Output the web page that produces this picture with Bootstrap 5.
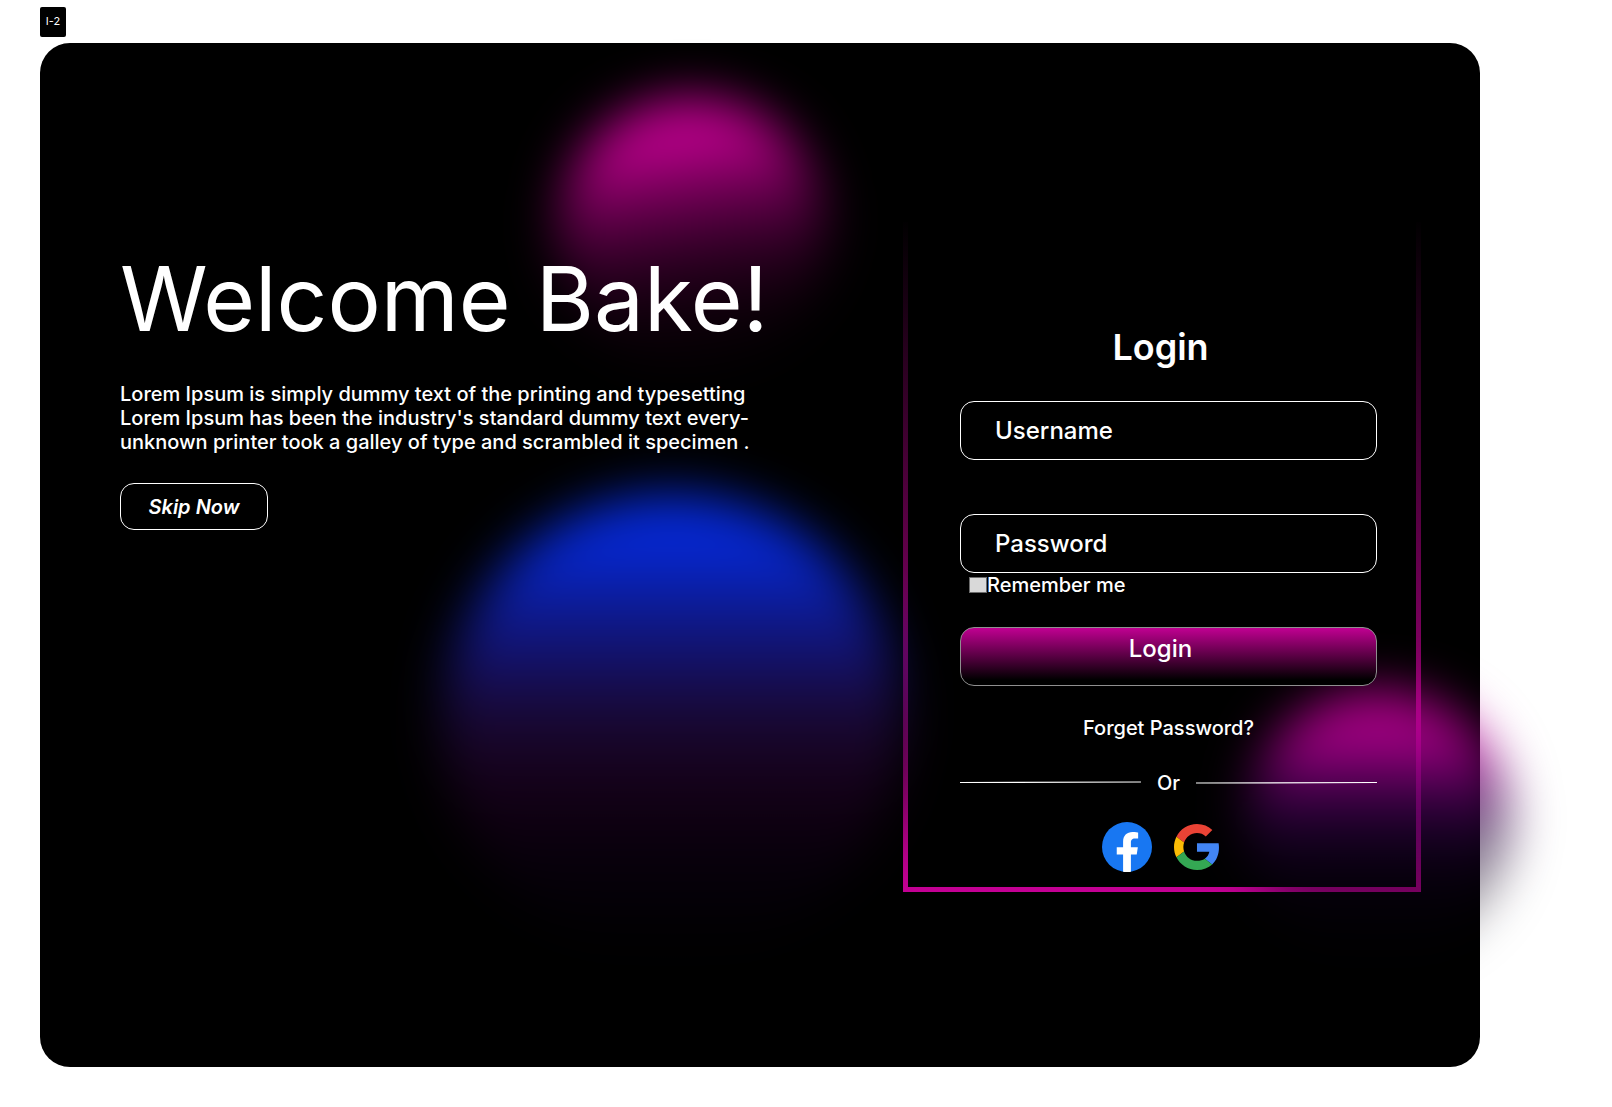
<!DOCTYPE html>
<html lang="en">
<head>
<meta charset="utf-8">
<meta name="viewport" content="width=device-width, initial-scale=1">
<title>Login</title>
<link href="https://cdn.jsdelivr.net/npm/bootstrap@5.3.0/dist/css/bootstrap.min.css" rel="stylesheet">
<style>
  body { font-family: Inter, "Liberation Sans", sans-serif; color: #fff; background: #fff; overflow-x: hidden; }
  .page { padding: 7px 132px 40px 40px; }
  .frame-tag { width: 26px; height: 30px; margin-bottom: 6px; border-radius: 2px; font-size: 11px; line-height: 14px; padding-bottom: 2px; }
  .stage { min-height: 1024px; border-radius: 30px; background: #000; padding: 179px 59px 175px 80px; gap: 60px; }

  .intro { padding-top: 22px; z-index: 2; }
  .intro h1 { font-size: 89px; line-height: 109px; font-weight: 400; margin-bottom: 29px; }
  .intro p { font-size: 20px; line-height: 24px; font-weight: 500; margin-bottom: 29px; }
  .btn-skip { width: 148px; height: 47px; border: 1px solid #fff; border-radius: 14px; color: #fff; font-size: 20px; line-height: 24px; font-weight: 600; font-style: italic; padding: 0; }
  .btn-skip:hover { background: #fff; color: #000; }

  .login-panel { width: 518px; border: 0 solid; border-width: 0 5px 5px; border-image: linear-gradient(rgba(196,0,148,0), #c40094) 5; padding: 103px 39px 15px 52px; }
  .login-form { z-index: 2; }
  .login-form h2 { font-size: 36px; line-height: 44px; font-weight: 600; margin-bottom: 32px; }
  .field { height: 59px; border: 1px solid #fff; border-radius: 14px; background: transparent; color: #fff; font-size: 24px; line-height: 30px; font-weight: 500; padding: 0 34px; }
  .field:focus { background: transparent; color: #fff; border-color: #c40094; box-shadow: none; }
  .field::placeholder { color: #fff; opacity: 1; }
  .field-gap { margin-bottom: 54px; }
  .remember { padding-left: 9px; margin-bottom: 30px; }
  .login-form .remember-box { width: 18px; height: 16px; margin: 0; border: 1px solid #6b6b6b; border-radius: 0; background-color: #d9d9d9; }
  .login-form .remember-box:checked { background-color: #c40094; }
  .note { font-size: 20px; line-height: 24px; font-weight: 500; }
  .btn-login { height: 59px; border: 1px solid #8f8f8f; border-radius: 14px; background: linear-gradient(#c40094, #000 90%) border-box; color: #fff; font-size: 24px; line-height: 30px; font-weight: 500; padding: 0 16px 16px 0; margin-bottom: 30px; }
  .btn-login:hover { color: #fff; border-color: #fff; }
  .divider { gap: 16px; margin: 31px 0 27px; }
  .divider svg { height: 4px; flex: 1 1 0; min-width: 0; }
  .socials { gap: 22px; }

  .glow { position: absolute; border-radius: 50%; pointer-events: none; z-index: 1; filter: blur(25px); }
  .glow-pink { left: 517px; top: 54px; width: 270px; height: 270px;
    background: linear-gradient(172deg, #c40094 0%, #b80089 20%, #6a0050 38%, #2c0022 58%, #0e000a 76%, #000 100%); }
  .glow-blue { left: 402px; top: 450px; width: 460px; height: 460px;
    background: linear-gradient(#052ad8 0%, #0626cc 13%, #0d1b92 25%, #13126c 35%, #180a3c 46%, #180422 57%, #100012 69%, #06000a 82%, #000 100%); }
  .glow-corner { right: -30px; top: 647px; width: 264px; height: 264px;
    background: linear-gradient(rgba(196,0,152,.9) 0%, rgba(184,0,150,.85) 20%, rgba(100,0,105,.76) 35%, rgba(50,4,72,.66) 48%, rgba(22,0,38,.5) 63%, rgba(10,0,20,.4) 78%, rgba(0,0,0,.36) 100%); }

  @media (max-width: 1400px) {
    .page { padding-right: 40px; }
    .stage { flex-wrap: wrap; padding: 80px 40px; }
  }
  @media (max-width: 700px) {
    .intro h1 { font-size: 48px; line-height: 58px; }
    .login-panel { padding-left: 24px; padding-right: 24px; }
  }
</style>
<script src="https://cdn.jsdelivr.net/npm/bootstrap@5.3.0/dist/js/bootstrap.bundle.min.js"></script>
</head>
<body>
<div class="page">
  <div class="frame-tag bg-black d-flex align-items-center justify-content-center">I-2</div>
  <main class="stage position-relative d-flex align-items-start justify-content-between">
    <div class="glow glow-pink"></div>
    <div class="glow glow-blue"></div>
    <div class="glow glow-corner"></div>

    <section class="intro position-relative">
      <h1>Welcome Bake!</h1>
      <p>Lorem Ipsum is simply dummy text of the printing and typesetting<br>Lorem Ipsum has been the industry's standard dummy text every-<br>unknown printer took a galley of type and scrambled it specimen .</p>
      <button type="button" class="btn btn-skip">Skip Now</button>
    </section>

    <section class="login-panel mw-100">
      <form class="login-form position-relative">
        <h2 class="text-center pe-3">Login</h2>
        <label class="d-block field-gap" for="username">
          <input class="form-control field" id="username" type="text" placeholder="Username" aria-label="Username">
        </label>
        <label class="d-block" for="password">
          <input class="form-control field" id="password" type="password" placeholder="Password" aria-label="Password">
        </label>
        <div class="remember d-flex align-items-center">
          <input class="form-check-input remember-box" id="remember" type="checkbox">
          <label class="note" for="remember">Remember me</label>
        </div>
        <button type="submit" class="btn btn-login w-100">Login</button>
        <div class="text-center note"><a class="text-white text-decoration-none" href="#">Forget Password?</a></div>
        <div class="divider d-flex align-items-center">
          <svg viewBox="0 0 181 4" preserveAspectRatio="none" aria-hidden="true"><path d="M0 1.5L181 1" stroke="#fff" stroke-width="1.2"/></svg>
          <span class="note">Or</span>
          <svg viewBox="0 0 181 4" preserveAspectRatio="none" aria-hidden="true"><path d="M0 2L181 1.5" stroke="#fff" stroke-width="1.2"/></svg>
        </div>
        <div class="socials d-flex align-items-center justify-content-center pe-3">
          <a class="d-flex" href="#" aria-label="Facebook">
            <svg width="50" height="50" viewBox="0 0 24 24"><circle cx="12" cy="12" r="12" fill="#1877f2"/><path fill="#fff" d="M10.125 23.927v-8.385H7.078v-3.47h3.047V9.43c0-3.007 1.792-4.669 4.533-4.669 1.312 0 2.686.235 2.686.235v2.953H15.83c-1.491 0-1.956.925-1.956 1.874v2.25h3.328l-.532 3.47h-2.796v8.385a12 12 0 0 1-3.749 0z"/></svg>
          </a>
          <a class="d-flex" href="#" aria-label="Google">
            <svg width="45" height="46" viewBox="0 0 47 48"><path fill="#ea4335" d="M24 9.5c3.54 0 6.71 1.22 9.21 3.6l6.85-6.85C35.9 2.38 30.47 0 24 0 14.62 0 6.51 5.38 2.56 13.22l7.98 6.19C12.43 13.72 17.74 9.5 24 9.5z"/><path fill="#4285f4" d="M46.98 24.55c0-1.57-.15-3.09-.38-4.55H24v9.02h12.94c-.58 2.96-2.26 5.48-4.78 7.18l7.73 6c4.51-4.18 7.09-10.36 7.09-17.65z"/><path fill="#fbbc05" d="M10.53 28.59c-.48-1.45-.76-2.99-.76-4.59s.27-3.14.76-4.59l-7.98-6.19C.92 16.46 0 20.12 0 24c0 3.88.92 7.54 2.56 10.78l7.97-6.19z"/><path fill="#34a853" d="M24 48c6.48 0 11.93-2.13 15.89-5.81l-7.73-6c-2.15 1.45-4.92 2.3-8.16 2.3-6.26 0-11.57-4.22-13.47-9.91l-7.98 6.19C6.51 42.62 14.62 48 24 48z"/></svg>
          </a>
        </div>
      </form>
    </section>
  </main>
</div>
</body>
</html>
